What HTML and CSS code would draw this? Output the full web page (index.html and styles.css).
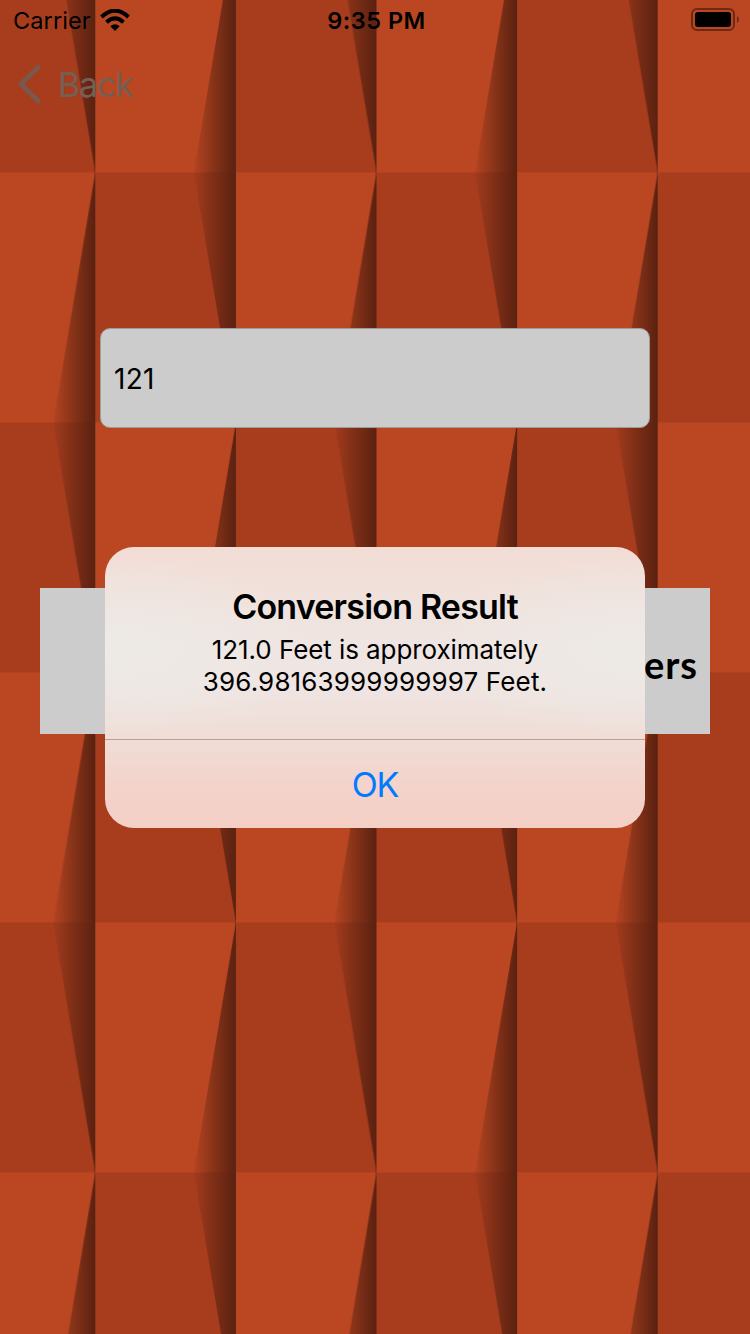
FILE: index.html
```html
<!DOCTYPE html>
<html lang="en">
<head>
<meta charset="utf-8">
<title>Conversion</title>
<link rel="stylesheet" href="styles.css">
</head>
<body>
<div class="screen">
  <svg class="wallpaper" width="750" height="1334" aria-hidden="true">
    <defs>
      <linearGradient id="fold" x1="0" x2="1" y1="0" y2="0">
        <stop offset="0" stop-color="#5a2110" stop-opacity=".08"/>
        <stop offset=".5" stop-color="#5a2110" stop-opacity=".56"/>
        <stop offset="1" stop-color="#5a2110"/>
      </linearGradient>
      <linearGradient id="a" gradientUnits="userSpaceOnUse" x1="98.6" x2="140.6" y1="0" y2="0" href="#fold"/>
      <linearGradient id="b" gradientUnits="userSpaceOnUse" x1="239.2" x2="281.2" y1="0" y2="0" href="#fold"/>
      <pattern id="tiles" patternUnits="userSpaceOnUse" x="95.3" y="172.4" width="281.2" height="500">
        <rect width="281.2" height="500" fill="#bb4722"/>
        <rect width="140.6" height="250" fill="#a83d1e"/>
        <rect x="140.6" y="250" width="140.6" height="250" fill="#a83d1e"/>
        <path d="M98.6 0H140.6V500H98.6L140.6 250Z" fill="url(#a)"/>
        <path d="M281.2 0V500L239.2 250Z" fill="url(#b)"/>
        <path d="M140.2 0V500M280.8 0V500" stroke="#5a2110" stroke-opacity=".6" stroke-width=".8"/>
      </pattern>
    </defs>
    <rect width="750" height="1334" fill="url(#tiles)"/>
  </svg>

  <header class="status">
    <div class="status-left">
      <span class="carrier">Carrier</span>
      <svg class="wifi" width="30" height="22" viewBox="0 0 30 22">
        <g fill="none" stroke="#000" stroke-width="4">
          <path d="M1.5 8Q15-4.5 28.500 8"/>
          <path d="M6.500 13.300Q15 5.600 23.500 13.300"/>
        </g>
        <path d="M10.300 17.200Q15 13.300 19.700 17.200L15 21.900Z"/>
      </svg>
    </div>
    <span class="time">9:35 PM</span>
    <svg class="battery" width="49" height="24" viewBox="0 0 49 24">
      <rect x="1" y="1" width="42" height="21" rx="5" fill="none" stroke="#000" stroke-opacity=".42" stroke-width="2"/>
      <rect x="4" y="4" width="36" height="15" rx="3"/>
      <path d="M46 8Q48 9 48 11.500T46 15Z" fill-opacity=".42"/>
    </svg>
  </header>

  <nav class="nav">
    <svg width="24" height="40" viewBox="0 0 24 40"><path d="M21 3.500L4 20L21 37" fill="none" stroke="#7c574c" stroke-width="5" stroke-linecap="round" stroke-linejoin="round"/></svg>
    <span class="back">Back</span>
  </nav>

  <main class="content">
    <div class="field">121</div>
    <div class="convert"><span class="convert-label">ers</span></div>
  </main>

  <div class="alert">
    <div class="alert-body">
      <h1 class="alert-title">Conversion Result</h1>
      <p class="line-one">121.0 Feet is approximately</p>
      <p class="line-two">396.98163999999997 Feet.</p>
    </div>
    <div class="alert-action"><span class="ok">OK</span></div>
  </div>
</div>
</body>
</html>
```
FILE: styles.css
```css
* { box-sizing: border-box; margin: 0; padding: 0; }
body { width: 750px; height: 1334px; overflow: hidden; font-family: Inter, "Liberation Sans", sans-serif; color: #000; }
.screen { position: relative; width: 750px; height: 1334px; overflow: hidden; }
.wallpaper { position: absolute; inset: 0; z-index: -1; }
.status { display: grid; grid-template-columns: 1fr auto 1fr; align-items: center; height: 40px; padding: 0 10px 2px 13px; }
.status-left { display: flex; align-items: center; gap: 9px; }
.carrier { font-size: 23.5px; letter-spacing: 0.1px; line-height: 38px; padding-top: 2px; }
.time { font-size: 23.5px; font-weight: 600; letter-spacing: 0.5px; line-height: 38px; padding-top: 2px; }
.battery { justify-self: end; }
.nav { display: flex; align-items: center; gap: 17px; height: 88px; padding-left: 17px; }
.back { font-size: 34px; line-height: 40px; letter-spacing: -1.2px; padding-top: 1px; color: #745f57; }
.content { padding: 200px 40px 0; }
.field { height: 100px; margin: 0 60px 160px; padding-left: 13px; border: 1px solid #a19c9a; border-radius: 10px; background: #ccc; font-size: 28px; line-height: 100px; letter-spacing: 0.3px; }
.convert { display: flex; justify-content: flex-end; align-items: center; height: 146px; padding: 5px 12px 0 0; background: #ccc; }
.convert-label { font-family: Lato, "Open Sans", sans-serif; font-size: 38px; font-weight: 700; line-height: 40px; letter-spacing: 1px; }
.alert { position: absolute; left: 105px; top: 547px; width: 540px; height: 281px; border-radius: 29px; overflow: hidden; text-align: center; background: radial-gradient(ellipse 190px 90px at 3% 36%, rgba(237,235,231,.85), rgba(237,235,231,0)), radial-gradient(ellipse 190px 90px at 97% 36%, rgba(237,235,231,.85), rgba(237,235,231,0)), linear-gradient(#f2ddd5, #efe5e2 34%, #efe5e2 50%, #f0ddd6 68%, #f3d3cb 85%, #f4cfc5); }
.alert-body { height: 193px; padding-top: 38px; border-bottom: 1px solid #bc9e95; }
.alert-title { font-size: 34px; font-weight: 600; line-height: 44px; letter-spacing: -0.8px; }
.line-one, .line-two { font-size: 26px; line-height: 32px; white-space: nowrap; }
.line-one { padding-top: 5px; height: 37px; letter-spacing: -0.08px; }
.line-two { letter-spacing: 0.15px; }
.alert-action { display: grid; place-items: center; height: 88px; padding-top: 1px; }
.ok { color: #007aff; font-size: 34px; line-height: 40px; letter-spacing: -1.2px; }
```
